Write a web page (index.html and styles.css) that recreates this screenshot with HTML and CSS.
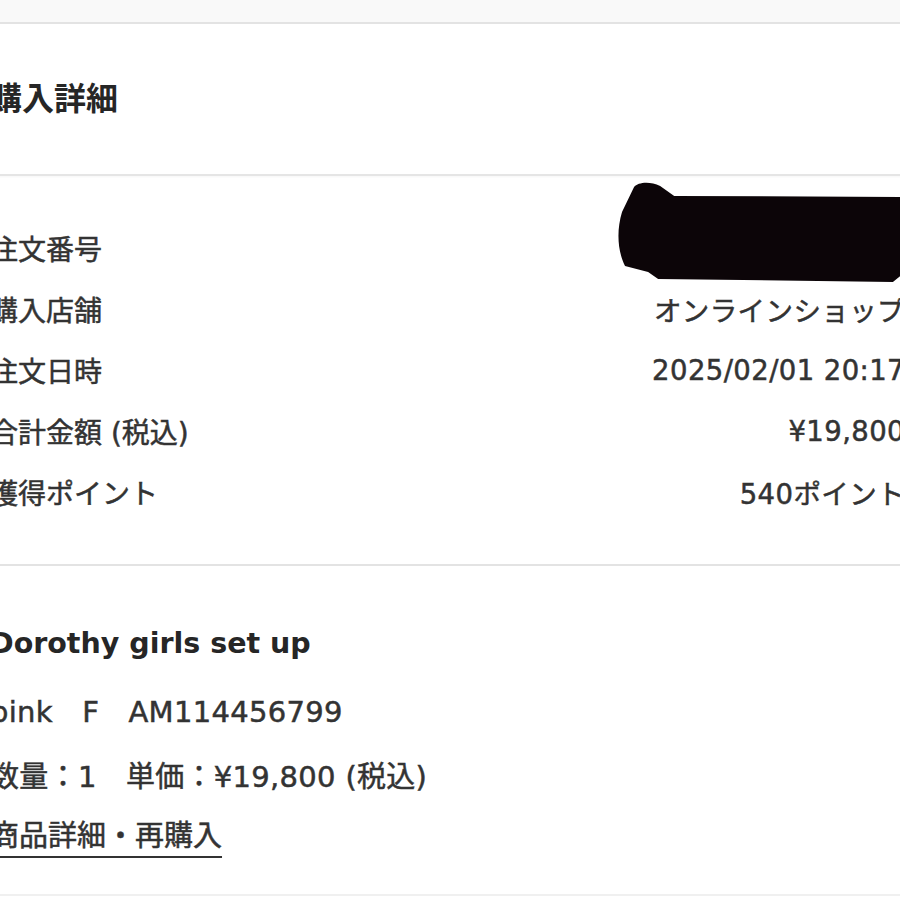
FILE: index.html
```html
<!DOCTYPE html>
<html lang="ja">
<head>
<meta charset="utf-8">
<title>購入詳細</title>
<link rel="stylesheet" href="styles.css">
</head>
<body>
<div class="page">
  <div class="top-strip"></div>
  <section class="head">
    <h1 class="title">購入詳細</h1>
  </section>
  <section class="details">
    <div class="row row-hidden">
      <span class="label">注文番号</span>
      <span class="value"><span class="num">1234567890123</span></span>
      <svg class="redact" viewBox="0 0 300 100" preserveAspectRatio="none" aria-hidden="true">
        <path d="M18 5 C22 0 34 -1 44 4 L58 14 L300 15 L300 90 L286 92 L276 100 L42 97 L32 90 L9 84 C2 70 0 50 6 30 Z" fill="#0c0508"/>
      </svg>
    </div>
    <div class="row">
      <span class="label">購入店舗</span>
      <span class="value">オンラインショップ</span>
    </div>
    <div class="row">
      <span class="label">注文日時</span>
      <span class="value">2025/02/01 20:17</span>
    </div>
    <div class="row">
      <span class="label">合計金額 (税込)</span>
      <span class="value">¥19,800</span>
    </div>
    <div class="row">
      <span class="label">獲得ポイント</span>
      <span class="value">540ポイント</span>
    </div>
  </section>
  <section class="item">
    <h2 class="item-name">Dorothy girls set up</h2>
    <p class="item-line">pink　F　AM114456799</p>
    <p class="item-line">数量：1　単価：¥19,800 (税込)</p>
    <a class="item-link" href="#">商品詳細・再購入</a>
  </section>
</div>
</body>
</html>
```
FILE: styles.css
```css
html, body {
  margin: 0;
  padding: 0;
  background: #ffffff;
  overflow: hidden;
}

body {
  font-family: "DejaVu Sans", "Noto Sans CJK JP", sans-serif;
  color: #333333;
}

.page {
  width: 915px;
  margin-left: -10px;
}

.top-strip {
  height: 22px;
  background: #f9f9f9;
  border-bottom: 2px solid #e3e3e3;
}

.head {
  height: 150px;
  display: flex;
  align-items: center;
  border-bottom: 2px solid #e5e5e5;
  box-shadow: 0 1px 2px rgba(0,0,0,0.04);
}

.title {
  margin: 0;
  font-size: 32px;
  font-weight: 700;
  color: #262626;
  line-height: 1;
}

.details {
  padding: 41px 0 42px;
  border-bottom: 2px solid #e3e3e3;
}

.row {
  position: relative;
  height: 61px;
  display: flex;
  align-items: center;
  justify-content: space-between;
  font-size: 28px;
  -webkit-text-stroke: 0.5px #333333;
}

.label {
  white-space: nowrap;
}

.value {
  white-space: nowrap;
  font-size: 27.5px;
  letter-spacing: 0.4px;
}

.row-hidden .num {
  visibility: hidden;
}

.redact {
  position: absolute;
  right: -12px;
  top: -35px;
  width: 301px;
  height: 100px;
}

.item {
  padding: 60px 0 0;
  height: 268px;
  border-bottom: 2px solid #f0f0f0;
  display: flex;
  flex-direction: column;
  align-items: flex-start;
}

.item-name {
  margin: 0;
  font-size: 28.5px;
  font-weight: 700;
  color: #262626;
  line-height: 36px;
}

.item-line {
  margin: 33px 0 0;
  font-size: 29px;
  line-height: 34px;
  white-space: nowrap;
  letter-spacing: 0.3px;
  -webkit-text-stroke: 0.5px #333333;
}

.item-line + .item-line {
  margin-top: 31px;
}

.item-link {
  margin-top: 25px;
  font-size: 29px;
  line-height: 34px;
  color: #333333;
  -webkit-text-stroke: 0.5px #333333;
  text-decoration: underline;
  text-decoration-thickness: 2px;
  text-underline-offset: 10px;
}
```
